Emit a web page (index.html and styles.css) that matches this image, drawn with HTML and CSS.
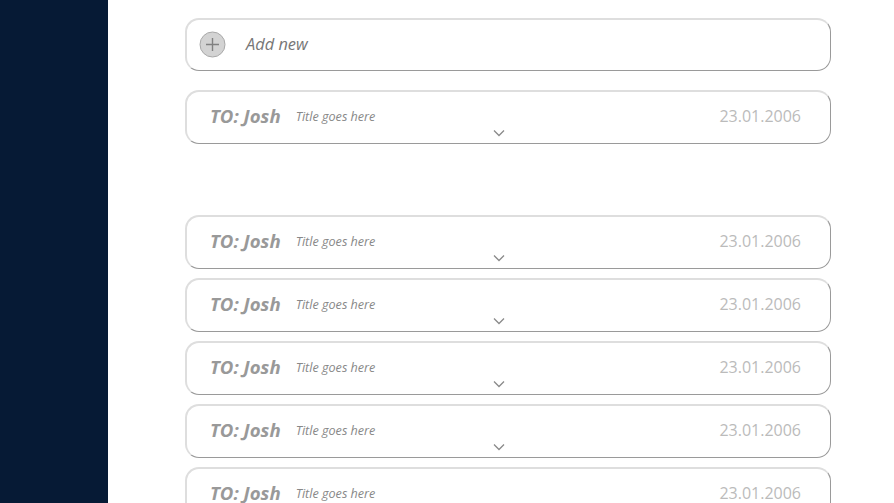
FILE: index.html
```html
<!DOCTYPE html>
<html>
<head>
<meta charset="utf-8">
<link rel="stylesheet" href="styles.css">
</head>
<body>
<div class="app">
  <aside class="sidebar"></aside>
  <main class="main">
    <div class="card add">
      <span class="plus"><svg width="27" height="27" viewBox="0 0 27 27"><circle cx="13.5" cy="13.5" r="12.5" fill="#d3d3d3" stroke="#a8a8a8" stroke-width="1"/><path d="M13.5 7v13M7 13.5h13" stroke="#808080" stroke-width="1.4"/></svg></span>
      <span class="add-label">Add new</span>
    </div>
    <div class="card msg first">
      <span class="to">TO: Josh</span><span class="title">Title goes here</span><span class="date">23.01.2006</span>
      <svg class="chev" width="12" height="8" viewBox="0 0 12 8"><path d="M1 1.5l5 5 5-5" fill="none" stroke="#8a8a8a" stroke-width="1.3"/></svg>
    </div>
    <div class="list">
      <div class="card msg">
        <span class="to">TO: Josh</span><span class="title">Title goes here</span><span class="date">23.01.2006</span>
        <svg class="chev" width="12" height="8" viewBox="0 0 12 8"><path d="M1 1.5l5 5 5-5" fill="none" stroke="#8a8a8a" stroke-width="1.3"/></svg>
      </div>
      <div class="card msg">
        <span class="to">TO: Josh</span><span class="title">Title goes here</span><span class="date">23.01.2006</span>
        <svg class="chev" width="12" height="8" viewBox="0 0 12 8"><path d="M1 1.5l5 5 5-5" fill="none" stroke="#8a8a8a" stroke-width="1.3"/></svg>
      </div>
      <div class="card msg">
        <span class="to">TO: Josh</span><span class="title">Title goes here</span><span class="date">23.01.2006</span>
        <svg class="chev" width="12" height="8" viewBox="0 0 12 8"><path d="M1 1.5l5 5 5-5" fill="none" stroke="#8a8a8a" stroke-width="1.3"/></svg>
      </div>
      <div class="card msg">
        <span class="to">TO: Josh</span><span class="title">Title goes here</span><span class="date">23.01.2006</span>
        <svg class="chev" width="12" height="8" viewBox="0 0 12 8"><path d="M1 1.5l5 5 5-5" fill="none" stroke="#8a8a8a" stroke-width="1.3"/></svg>
      </div>
      <div class="card msg">
        <span class="to">TO: Josh</span><span class="title">Title goes here</span><span class="date">23.01.2006</span>
        <svg class="chev" width="12" height="8" viewBox="0 0 12 8"><path d="M1 1.5l5 5 5-5" fill="none" stroke="#8a8a8a" stroke-width="1.3"/></svg>
      </div>
    </div>
  </main>
</div>
</body>
</html>
```
FILE: styles.css
```css
html, body {
  margin: 0;
  padding: 0;
  height: 100%;
  overflow: hidden;
  background: #fff;
  font-family: "Open Sans", "Noto Sans", sans-serif;
}
.app {
  display: flex;
  height: 503px;
}
.sidebar {
  width: 108px;
  flex: none;
  background: #061a35;
}
.main {
  flex: 1;
  padding: 18px 0 0 77px;
  display: flex;
  flex-direction: column;
}
.card {
  box-sizing: border-box;
  width: 646px;
  height: 54px;
  flex: none;
  border-radius: 14px;
  border-top: 2px solid #dedede;
  border-left: 2px solid #dedede;
  border-right: 1px solid #9a9a9a;
  border-bottom: 1px solid #9a9a9a;
  background: #fff;
  display: flex;
  align-items: center;
  position: relative;
}
.add {
  height: 53px;
  padding-left: 12px;
  padding-bottom: 1px;
}
.plus {
  display: flex;
  width: 27px;
  height: 27px;
}
.add-label {
  margin-left: 20px;
  font-style: italic;
  font-size: 16.4px;
  color: #777;
  padding-bottom: 3px;
}
.msg {
  padding: 0 29px 5px 23px;
}
.msg.first {
  margin-top: 19px;
}
.to {
  font-weight: 700;
  font-style: italic;
  font-size: 18.6px;
  color: #999;
}
.title {
  margin-left: 15px;
  font-style: italic;
  font-size: 12.6px;
  color: #888;
  padding-top: 3px;
}
.date {
  margin-left: auto;
  font-size: 16px;
  color: #bbb;
  padding-top: 1px;
}
.chev {
  position: absolute;
  left: 306px;
  top: 37px;
}
.list {
  margin-top: 71px;
  display: flex;
  flex-direction: column;
  gap: 9px;
}
```
